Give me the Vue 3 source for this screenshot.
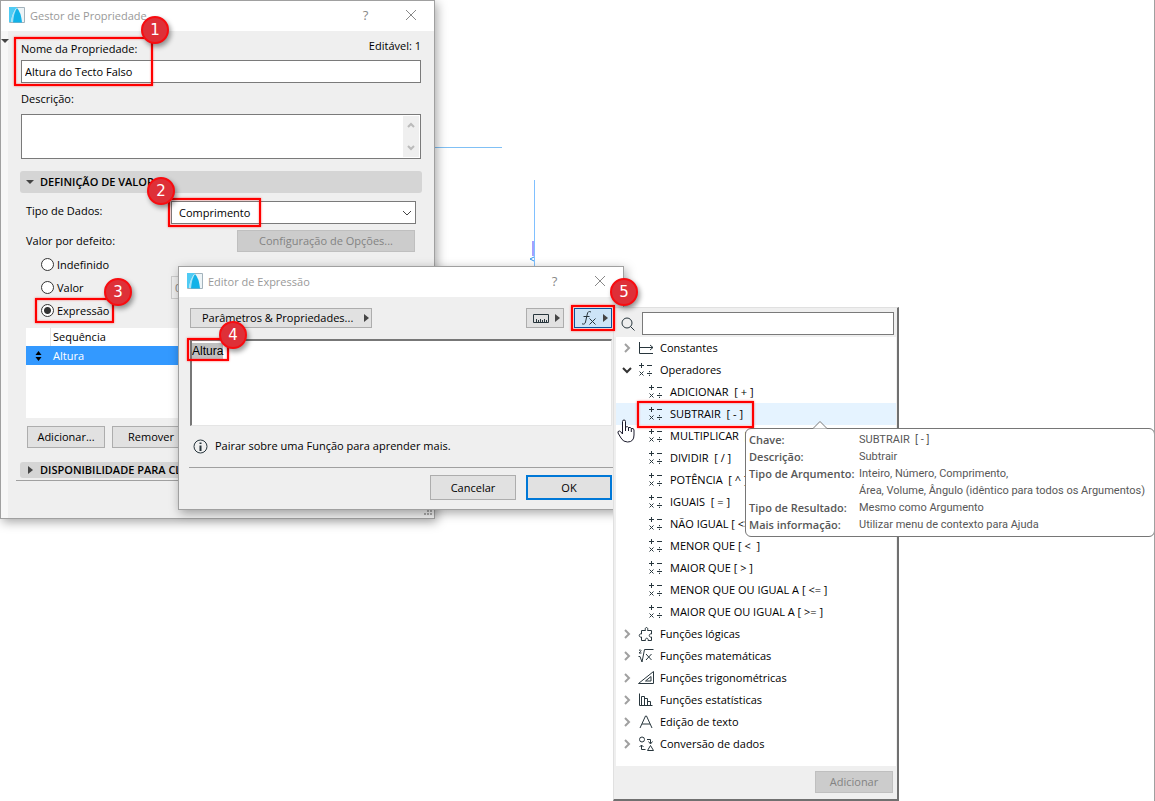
<script setup>
  import { onMounted, ref } from 'vue'

  const propertyName = ref('Altura do Tecto Falso')
  const description = ref('')
  const dataType = ref('Comprimento')
  const defaultMode = ref('expression')
  const expression = ref('Altura')
  const search = ref('')
  const editor = ref(null)

  const modes = [
    { id: 'undefined', label: 'Indefinido' },
    { id: 'value', label: 'Valor' },
    { id: 'expression', label: 'Expressão' },
  ]

  const functions = [
    { icon: 'constants', label: 'Constantes' },
    { icon: 'operators', label: 'Operadores', open: true },
    { icon: 'operators', label: 'ADICIONAR  [ + ]', child: true },
    { icon: 'operators', label: 'SUBTRAIR  [ - ]', child: true, active: true },
    { icon: 'operators', label: 'MULTIPLICAR  [ * ]', child: true },
    { icon: 'operators', label: 'DIVIDIR  [ / ]', child: true },
    { icon: 'operators', label: 'POTÊNCIA  [ ^ ]', child: true },
    { icon: 'operators', label: 'IGUAIS  [ = ]', child: true },
    { icon: 'operators', label: 'NÃO IGUAL [ <> ]', child: true },
    { icon: 'operators', label: 'MENOR QUE [ <  ]', child: true },
    { icon: 'operators', label: 'MAIOR QUE [ > ]', child: true },
    { icon: 'operators', label: 'MENOR QUE OU IGUAL A [ <= ]', child: true },
    { icon: 'operators', label: 'MAIOR QUE OU IGUAL A [ >= ]', child: true },
    { icon: 'logic', label: 'Funções lógicas' },
    { icon: 'math', label: 'Funções matemáticas' },
    { icon: 'trig', label: 'Funções trigonométricas' },
    { icon: 'stats', label: 'Funções estatísticas' },
    { icon: 'text', label: 'Edição de texto' },
    { icon: 'convert', label: 'Conversão de dados' },
  ]

  const icons = {
    constants: 'M1.5 2v11.5H15M1.5 7.5H15M12 5l3 2.5-3 2.5',
    operators: 'M1 3.5h5M3.5 1v5M9 3.5h5M1.5 9.5l4 4M5.5 9.5l-4 4M9 11.5h5M11.5 9v1.2M11.5 12.8v1.2',
    logic: 'M3.5 14.5v-3.5c-3 1-3-4 0-3v-3.500h4c-1.500-4 3.500-4 2 0h4v3.500c-3-1-3 4 0 3v3.500h-3.500c1-3-3.500-3-2.500 0z',
    math: 'M1 2.500q1.500-1.500 2 0q0 1-2 2.500h2.500M.5 8.500h1.500l2 5.500 2.500-12.500h9M8 6l5.500 6M13.500 6l-5.500 6',
    trig: 'M.5 13.500h15v-12zM7.500 11h5.500v-4.500z',
    stats: 'M1.500 1.500v12h13M3.500 13.500v-9h3v9M6.500 6.500h3v7M9.500 9.500h3v4',
    text: 'M2 14l5.500-12h1l5.500 12M4 10h8',
    convert: 'M6.500 3.500a2.500 2.500 0 1 1-5 0a2.500 2.500 0 1 1 5 0M9 3.500h3.500v4M10.500 5.500l2 2.500 2-2.500M3.500 9v4.500h4M1.500 11l2-2 2 2M9.500 14.500l3-5 3 5z',
  }

  const hints = [
    ['Chave:', 'SUBTRAIR  [ - ]'],
    ['Descrição:', 'Subtrair'],
    ['Tipo de Arqumento:', 'Inteiro, Número, Comprimento,\nÁrea, Volume, Ângulo (idêntico para todos os Argumentos)'],
    ['Tipo de Resultado:', 'Mesmo como Argumento'],
    ['Mais informação:', 'Utilizar menu de contexto para Ajuda'],
  ]

  onMounted(() => {
    editor.value.focus()
    editor.value.select()
  })
</script>

<template>
  <main class="desktop">
    <svg class="drawing" width="110" height="130" fill="none" aria-hidden="true">
      <path d="M0 7.500h72" stroke="#80c0f5" />
      <path d="M104.500 40v90" stroke="#80c0ff" />
      <path d="M103 101v15" stroke="#a4a0ff" stroke-width="2" />
      <path d="M104 117l-4 2 4 2" stroke="#3296ee" />
    </svg>

    <section class="window manager">
      <header class="titlebar">
        <svg class="logo" width="16" height="16" viewBox="0 0 16 16">
          <path d="M.5.500h15v15h-15z" fill="#edf4f7" stroke="#a3b3bc" />
          <path d="M0 0h8Q3 6 2 15H0z" fill="#4fcbf4" />
          <path d="M2 15Q3 6 8 1L5 15z" fill="#a5e2f7" />
          <path d="M4 15.500Q5 5 8 1Q12 5 13 15.500z" fill="#12b2e8" />
        </svg>
        <h1>Gestor de Propriedade</h1>
        <button class="title-button" aria-label="Ajuda">?</button>
        <button class="title-button" aria-label="Fechar">
          <svg width="12" height="12" viewBox="0 0 12 12"><path d="M1 1l10 10M11 1L1 11" stroke="#888" /></svg>
        </button>
      </header>

      <div class="manager-body">
        <div class="gutter"><i class="tri-down"></i></div>
        <div class="form">
          <div class="name-row">
            <label for="name">Nome da Propriedade:</label>
            <span class="editable">Editável: 1</span>
          </div>
          <input id="name" v-model="propertyName" class="box name-input" type="text" />
          <label class="description-label" for="description">Descrição:</label>
          <div class="box description">
            <textarea id="description" v-model="description"></textarea>
            <div class="scrollbar">
              <svg width="8" height="6" viewBox="0 0 8 6"><path d="M1 5l3-3 3 3" /></svg>
              <svg width="8" height="6" viewBox="0 0 8 6"><path d="M1 1l3 3 3-3" /></svg>
            </div>
          </div>

          <h2 class="section"><i class="tri-down"></i>DEFINIÇÃO DE VALOR</h2>
          <div class="type-row">
            <label for="type">Tipo de Dados:</label>
            <div class="select">
              <select id="type" v-model="dataType" class="box">
                <option>Comprimento</option>
              </select>
              <svg width="10" height="6" viewBox="0 0 10 6"><path d="M1 1l4 4 4-4" fill="none" stroke="#444" /></svg>
            </div>
          </div>
          <div class="default-row">
            <span>Valor por defeito:</span>
            <button class="button config" disabled>Configuração de Opções...</button>
          </div>
          <div class="modes">
            <div v-for="mode in modes" :key="mode.id" class="mode">
              <label>
                <input v-model="defaultMode" type="radio" name="mode" :value="mode.id" />
                {{ mode.label }}
              </label>
              <input v-if="mode.id === 'value'" class="value-input" type="text" value="0,00" aria-label="Valor" disabled />
            </div>
          </div>
          <table class="sequence">
            <tbody>
              <tr><td></td><td>Sequência</td></tr>
              <tr class="selected">
                <td><svg width="7" height="10" viewBox="0 0 7 10"><path d="M.5 4l3-4 3 4zM.5 6l3 4 3-4z" /></svg></td>
                <td>Altura</td>
              </tr>
            </tbody>
          </table>
          <div class="list-actions">
            <button class="button">Adicionar...</button>
            <button class="button">Remover</button>
          </div>
          <h2 class="section closed"><i class="tri-right"></i>DISPONIBILIDADE PARA CLASSES</h2>
          <hr />
        </div>
      </div>
      <svg class="grip" width="10" height="10" viewBox="0 0 10 10">
        <path d="M7 1h2M4 4h2M7 4h2M1 7h2M4 7h2M7 7h2" stroke="#a8a8a8" stroke-width="2" />
      </svg>
    </section>

    <section class="window expression">
      <header class="titlebar">
        <svg class="logo" width="16" height="16" viewBox="0 0 16 16">
          <path d="M.5.500h15v15h-15z" fill="#edf4f7" stroke="#a3b3bc" />
          <path d="M0 0h8Q3 6 2 15H0z" fill="#4fcbf4" />
          <path d="M2 15Q3 6 8 1L5 15z" fill="#a5e2f7" />
          <path d="M4 15.500Q5 5 8 1Q12 5 13 15.500z" fill="#12b2e8" />
        </svg>
        <h1>Editor de Expressão</h1>
        <button class="title-button" aria-label="Ajuda">?</button>
        <button class="title-button" aria-label="Fechar">
          <svg width="12" height="12" viewBox="0 0 12 12"><path d="M1 1l10 10M11 1L1 11" stroke="#888" /></svg>
        </button>
      </header>
      <div class="expression-body">
        <div class="toolbar">
          <button class="button params"><span>Parâmetros &amp; Propriedades...</span><i class="tri-right"></i></button>
          <button class="button tool" aria-label="Unidades">
            <svg width="16" height="9" viewBox="0 0 16 9" fill="none" stroke="#28363d">
              <path d="M.5.500h15v8H.5zM3.500 8V5M5.500 8V6M7.500 8V5M9.500 8V6M11.500 8V5M13.500 8V6" />
            </svg>
            <i class="tri-right"></i>
          </button>
          <button class="button tool pressed" aria-label="Funções">
            <svg width="16" height="16" viewBox="0 0 16 16" fill="none" stroke="#28363d">
              <path d="M10 2Q7 .5 6.300 4L4.500 12q-.7 3-3.500 1.800M2.500 6.500h6M8.500 8.500l6 6M14.500 8.500l-6 6" />
            </svg>
            <i class="tri-right"></i>
          </button>
        </div>
        <textarea ref="editor" v-model="expression" class="editor" aria-label="Expressão" spellcheck="false"></textarea>
        <p class="info">
          <svg width="15" height="15" viewBox="0 0 15 15" fill="none" stroke="#28363d">
            <circle cx="7.500" cy="7.500" r="6.500" /><path d="M7.500 6.500V12M7.500 3.500v1.500" stroke-width="2" />
          </svg>
          Pairar sobre uma Função para aprender mais.
        </p>
        <div class="dialog-actions">
          <button class="button">Cancelar</button>
          <button class="button ok">OK</button>
        </div>
      </div>
    </section>

    <section class="picker">
      <div class="search">
        <svg width="14" height="14" viewBox="0 0 14 14" fill="none" stroke="#28363d">
          <circle cx="6" cy="6" r="5" /><path d="M9.500 9.500l4 4" />
        </svg>
        <input v-model="search" class="box" type="search" aria-label="Procurar" />
      </div>
      <ul>
        <li v-for="item in functions" :key="item.label" :class="{ child: item.child, active: item.active }">
          <svg v-if="!item.child" class="chevron" :class="{ open: item.open }" width="8" height="10" viewBox="0 0 8 10">
            <path d="M2 1l4 4-4 4" />
          </svg>
          <svg class="icon" width="16" height="16" viewBox="0 0 16 16"><path :d="icons[item.icon]" /></svg>
          <span>{{ item.label }}</span>
        </li>
      </ul>
      <footer>
        <button class="button" disabled>Adicionar</button>
      </footer>
    </section>

    <aside class="tooltip">
      <svg class="tip" width="14" height="8" viewBox="0 0 14 8"><path d="M0 7.500L7 .5l7 7" fill="#fff" stroke="#767676" /></svg>
      <dl>
        <template v-for="hint in hints" :key="hint[0]">
          <dt>{{ hint[0] }}</dt>
          <dd>{{ hint[1] }}</dd>
        </template>
      </dl>
    </aside>

    <svg class="pointer" width="18" height="24" viewBox="0 0 18 24">
      <path d="M5.500 15V2.500q0-1.500 1.500-1.500t1.500 1.500V8q2.500-1 3 .5 2.500-.5 2.800 1 2.700-.5 2.700 1.500v5q0 7-6.500 7-4.500 0-6.500-4L1 14q-.5-2 1.500-2 1 0 3 3M8.500 8v4M11.500 8.500V12M14.300 9.500V13" fill="#fff" stroke="#1b1b2c" />
    </svg>

    <div class="frame frame-name"></div>
    <div class="frame frame-type"></div>
    <div class="frame frame-mode"></div>
    <div class="frame frame-text"></div>
    <div class="frame frame-functions"></div>
    <div class="frame frame-subtract"></div>
    <span class="badge badge-name">1</span>
    <span class="badge badge-type">2</span>
    <span class="badge badge-mode">3</span>
    <span class="badge badge-text">4</span>
    <span class="badge badge-functions">5</span>
  </main>
</template>

<style>
  body {
    margin: 0;
    background: #fff;
  }
</style>

<style scoped>
  * {
    box-sizing: border-box;
  }

  .desktop {
    position: relative;
    min-height: 100vh;
    overflow: hidden;
    border-right: 1px solid #a0a0a0;

    font-family: "Open Sans", "Noto Sans", sans-serif;
    font-size: 11px;
    line-height: 16px;
    color: #000;
  }

  button, input, select, textarea {
    margin: 0;
    font: inherit;
    color: inherit;
    outline: none;
  }

  svg {
    display: block;
    flex: none;
  }

  .drawing {
    position: absolute;
    left: 430px;
    top: 140px;
  }

  /* windows */
  .window {
    position: absolute;
    background: #efefef;
    border: 1px solid #a0a0a0;
    box-shadow: 2px 3px 10px rgba(0, 0, 0, 0.35);
  }

  .manager {
    left: 0;
    top: 0;
    width: 435px;
  }

  .expression {
    left: 178px;
    top: 266px;
    width: 446px;
  }

  .titlebar {
    height: 30px;
    padding: 0 1px 2px 8px;

    display: flex;
    align-items: center;

    background: #fff;
  }

  .titlebar h1 {
    flex: 1;
    margin: 0 0 0 5px;
    padding-top: 2px;
    font-size: 11px;
    font-weight: 400;
    color: #999;
  }

  .title-button {
    width: 45px;
    height: 28px;
    padding: 0;

    display: flex;
    justify-content: center;
    align-items: center;

    background: none;
    border: none;
    font-size: 13px;
    color: #888;
  }

  .manager-body {
    display: flex;
  }

  .gutter {
    width: 7px;
    padding-top: 8px;
    background: #f7f7f7;
  }

  .form {
    flex: 1;
    min-width: 0;
    padding: 5px 12px 37px;
  }

  .tri-down {
    flex: none;
    width: 0;
    border: 4px solid transparent;
    border-top-color: #444;
    border-bottom: none;
  }

  .gutter .tri-down {
    display: block;
  }

  .tri-right {
    flex: none;
    width: 0;
    border: 4px solid transparent;
    border-left: 5px solid #444;
    border-right: none;
  }

  .box {
    background: #fff;
    border: 1px solid #7a7a7a;
    border-radius: 0;
  }

  .name-row {
    height: 24px;
    margin: 0 1px;

    display: flex;
    justify-content: space-between;
    align-items: flex-end;
  }

  .name-row label {
    padding-bottom: 3px;
  }

  .editable {
    padding-bottom: 6px;
  }

  .name-input {
    display: block;
    width: calc(100% - 2px);
    height: 23px;
    margin: 0 1px 8px;
    padding: 0 3px;
  }

  .description-label {
    display: block;
    margin: 0 1px 7px;
  }

  .description {
    height: 45px;
    margin: 0 1px 12px;
    padding: 1px;
    display: flex;
  }

  .description textarea {
    flex: 1;
    min-width: 0;
    padding: 2px;
    border: none;
    resize: none;
    overflow: hidden;
  }

  .scrollbar {
    width: 16px;
    padding: 6px 0;

    display: flex;
    flex-direction: column;
    justify-content: space-between;
    align-items: center;

    background: #efefef;
  }

  .scrollbar path {
    fill: none;
    stroke: #bbb;
    stroke-width: 2;
  }

  .section {
    height: 22px;
    margin: 0;
    padding-left: 6px;

    display: flex;
    align-items: center;
    gap: 6px;

    background: #d5d5d5;
    border-radius: 3px;
    font-size: 11px;
    font-weight: 600;
    white-space: nowrap;
  }

  .section.closed {
    height: 16px;
    padding-left: 8px;
    gap: 7px;
  }

  .type-row, .default-row {
    padding: 0 6px;
    display: flex;
    justify-content: space-between;
  }

  .type-row {
    margin-top: 8px;
    line-height: 20px;
  }

  .default-row {
    margin-top: 6px;
    padding-right: 7px;
    line-height: 22px;
  }

  .select {
    position: relative;
    width: 245px;
  }

  .select select {
    display: block;
    width: 100%;
    height: 23px;
    padding: 0 7px;
    appearance: none;
  }

  .select svg {
    position: absolute;
    right: 4px;
    top: 9px;
    pointer-events: none;
  }

  .button {
    height: 22px;
    padding: 0 4px;
    background: #e1e1e1;
    border: 1px solid #adadad;
    border-radius: 0;
    line-height: 18px;
    text-align: center;
    white-space: nowrap;
  }

  .button:disabled {
    background: #ccc;
    border-color: #bfbfbf;
    color: #838383;
  }

  .config {
    width: 178px;
  }

  .modes {
    margin-top: 1px;
    padding-left: 21px;
  }

  .mode {
    height: 23px;

    display: flex;
    align-items: center;
    justify-content: space-between;
  }

  .mode label {
    display: flex;
    align-items: center;
    gap: 3px;
  }

  .mode [type=radio] {
    appearance: none;
    width: 13px;
    height: 13px;
    background: #fff;
    border: 1px solid #333;
    border-radius: 50%;
  }

  .mode [type=radio]:checked {
    background: radial-gradient(circle, #333 3px, #fff 4px);
  }

  .value-input {
    width: 251px;
    height: 23px;
    padding: 0 3px;
    background: #efefef;
    border: 1px solid #ccc;
    color: #838383;
  }

  .sequence {
    width: calc(100% - 12px);
    height: 90px;
    margin: 6px 6px 8px;
    border-collapse: collapse;
    background: #fff;
  }

  .sequence tbody {
    display: block;
    height: 90px;
  }

  .sequence tr {
    height: 18px;
    display: flex;
    align-items: center;
  }

  .sequence td {
    padding: 0 2px;
    flex: 1;
  }

  .sequence td:first-child {
    flex: none;
    width: 25px;
    height: 18px;

    display: flex;
    justify-content: center;
    align-items: center;

    border-right: 1px solid #e5e5e5;
  }

  .sequence .selected {
    height: 19px;
    background: #3399ff;
    color: #fff;
  }

  .sequence .selected td:first-child {
    border-color: transparent;
  }

  .list-actions {
    margin: 0 7px 14px;
    display: flex;
    gap: 7px;
  }

  .list-actions .button {
    width: 78px;
  }

  hr {
    margin: 2px 0 0 -4px;
    border: none;
    border-top: 1px solid #a0a0a0;
  }

  .grip {
    position: absolute;
    right: 1px;
    bottom: 1px;
  }

  /* expression editor */
  .expression-body {
    padding: 11px 11px 9px;
  }

  .toolbar {
    display: flex;
    gap: 10px;
    margin-bottom: 11px;
  }

  .params, .tool {
    display: flex;
    align-items: center;
    justify-content: space-between;
    height: 20px;
  }

  .params {
    width: 182px;
    margin-right: auto;
    padding: 0 2px 0 11px;
  }

  .tool {
    width: 38px;
    padding: 0 3px 0 6px;
  }

  .pressed {
    background: #cce4f7;
    border-color: #00549e;
  }

  .editor {
    display: block;
    width: 100%;
    height: 87px;
    padding: 2px 0;
    background: #fff;
    border: 1px solid #e5e5e5;
    border-top: 2px solid #777;
    border-left: 2px solid #777;
    border-radius: 0;
    resize: none;
    font-family: "Liberation Sans", Arial, sans-serif;
    font-size: 12px;
  }

  .editor::selection {
    background: #c0c0c0;
    color: #000;
  }

  .info {
    margin: 0 -1px;
    padding: 12px 4px 13px;

    display: flex;
    align-items: center;
    gap: 7px;

    border-bottom: 1px solid #a0a0a0;
  }

  .dialog-actions {
    margin-top: 7px;
    display: flex;
    justify-content: flex-end;
    gap: 10px;
  }

  .dialog-actions .button {
    width: 86px;
    height: 25px;
  }

  .dialog-actions .ok {
    border: 2px solid #0078d7;
  }

  /* function picker */
  .picker {
    position: absolute;
    left: 613px;
    top: 307px;
    width: 286px;
    padding: 2px 1px 1px 2px;
    background: #efefef;
    border: 1px solid #e0e0e0;
    border-right: 2px solid #707070;
    border-bottom: 2px solid #707070;
  }

  .search {
    padding: 2px 2px 2px 5px;
    display: flex;
    align-items: center;
    gap: 7px;
  }

  .search input {
    flex: 1;
    min-width: 0;
    height: 23px;
    appearance: none;
  }

  .picker ul {
    margin: 0;
    padding: 0 0 11px;
    list-style: none;
    background: #fff;
  }

  .picker li {
    height: 22px;
    padding-left: 7px;

    display: flex;
    align-items: center;

    white-space: pre;
  }

  .picker .child {
    padding-left: 32px;
  }

  .picker .active {
    background: #e5f3ff;
  }

  .chevron path {
    fill: none;
    stroke: #a0a0a0;
    stroke-width: 2;
  }

  .chevron.open {
    transform: rotate(90deg);
  }

  .chevron.open path {
    stroke: #333;
  }

  .icon {
    margin: 0 6px 0 7px;
    fill: none;
    stroke: #28363d;
  }

  .child .icon {
    margin-left: 0;
  }

  .picker footer {
    padding: 5px 3px;
    text-align: right;
  }

  .picker footer .button {
    display: inline-block;
    width: 78px;
    vertical-align: top;
  }

  .tooltip {
    position: absolute;
    left: 745px;
    top: 428px;
    width: 410px;
    padding: 2px 3px 3px;
    background: #fff;
    border: 1px solid #767676;
    border-radius: 6px;
    color: #575757;
  }

  .tip {
    position: absolute;
    left: 67px;
    top: -8px;
  }

  .tooltip dl {
    margin: 0;
    display: grid;
    grid-template-columns: 110px 1fr;
    line-height: 17px;
  }

  .tooltip dt {
    font-weight: 600;
    white-space: nowrap;
  }

  .tooltip dd {
    margin: 0;
    font-family: Roboto, sans-serif;
    white-space: pre;
  }

  .pointer {
    position: absolute;
    left: 617px;
    top: 419px;
  }

  /* numbered callouts */
  .frame {
    position: absolute;
    border: 2px solid #f00;
    box-shadow: 0 0 2px rgba(255, 0, 0, 0.6), inset 0 0 2px rgba(255, 0, 0, 0.6);
    pointer-events: none;
  }

  .frame-name { left: 14px; top: 37px; width: 139px; height: 49px; }
  .frame-type { left: 168px; top: 198px; width: 93px; height: 29px; }
  .frame-mode { left: 35px; top: 298px; width: 79px; height: 25px; }
  .frame-text { left: 187px; top: 338px; width: 42px; height: 23px; }
  .frame-functions { left: 571px; top: 305px; width: 44px; height: 26px; }
  .frame-subtract { left: 637px; top: 401px; width: 117px; height: 27px; }

  .badge {
    position: absolute;
    width: 28px;
    height: 28px;

    display: flex;
    justify-content: center;
    align-items: center;

    background: #de3038;
    border: 2px solid #f80c10;
    border-radius: 50%;
    box-shadow: 2px 3px 5px rgba(0, 0, 0, 0.4);
    font-family: "DejaVu Sans", sans-serif;
    font-size: 15px;
    color: #fff;
  }

  .badge-name { left: 141px; top: 16px; }
  .badge-type { left: 147px; top: 177px; }
  .badge-mode { left: 104px; top: 278px; }
  .badge-text { left: 219px; top: 321px; }
  .badge-functions { left: 610px; top: 278px; }
</style>
